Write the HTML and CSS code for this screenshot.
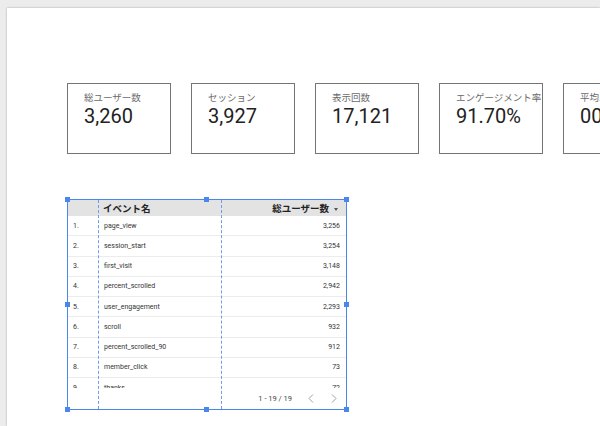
FILE: index.html
```html
<!DOCTYPE html>
<html lang="ja">
<head>
<meta charset="utf-8">
<link rel="stylesheet" href="styles.css">
</head>
<body>
<div class="canvas">
  <div class="cards">
    <div class="card"><div class="label">総ユーザー数</div><div class="value">3,260</div></div>
    <div class="card"><div class="label">セッション</div><div class="value">3,927</div></div>
    <div class="card"><div class="label">表示回数</div><div class="value">17,121</div></div>
    <div class="card"><div class="label">エンゲージメント率</div><div class="value">91.70%</div></div>
    <div class="card"><div class="label">平均エンゲージメント時間</div><div class="value">00:01:12</div></div>
  </div>

  <div class="table">
    <div class="thead">
      <div class="c-num"></div>
      <div class="c-name">イベント名</div>
      <div class="c-val">総ユーザー数<span class="caret"></span></div>
    </div>
    <div class="tbody">
      <div class="row"><div class="c-num">1.</div><div class="c-name">page_view</div><div class="c-val">3,256</div></div>
      <div class="row"><div class="c-num">2.</div><div class="c-name">session_start</div><div class="c-val">3,254</div></div>
      <div class="row"><div class="c-num">3.</div><div class="c-name">first_visit</div><div class="c-val">3,148</div></div>
      <div class="row"><div class="c-num">4.</div><div class="c-name">percent_scrolled</div><div class="c-val">2,942</div></div>
      <div class="row"><div class="c-num">5.</div><div class="c-name">user_engagement</div><div class="c-val">2,293</div></div>
      <div class="row"><div class="c-num">6.</div><div class="c-name">scroll</div><div class="c-val">932</div></div>
      <div class="row"><div class="c-num">7.</div><div class="c-name">percent_scrolled_90</div><div class="c-val">912</div></div>
      <div class="row"><div class="c-num">8.</div><div class="c-name">member_click</div><div class="c-val">73</div></div>
      <div class="row"><div class="c-num">9.</div><div class="c-name">thanks</div><div class="c-val">72</div></div>
    </div>
    <div class="tfoot">
      <span class="pages">1 - 19 / 19</span>
      <svg class="chev" width="6" height="9" viewBox="0 0 6 9"><polyline points="5,0.5 1,4.5 5,8.5" fill="none" stroke="#9e9e9e" stroke-width="1"/></svg>
      <svg class="chev" width="6" height="9" viewBox="0 0 6 9"><polyline points="1,0.5 5,4.5 1,8.5" fill="none" stroke="#9e9e9e" stroke-width="1"/></svg>
    </div>

    <div class="guide g1"></div>
    <div class="guide g2"></div>
    <div class="handle h-tl"></div>
    <div class="handle h-tm"></div>
    <div class="handle h-tr"></div>
    <div class="handle h-ml"></div>
    <div class="handle h-mr"></div>
    <div class="handle h-bl"></div>
    <div class="handle h-bm"></div>
    <div class="handle h-br"></div>
  </div>
</div>
</body>
</html>
```

FILE: styles.css
```css
html, body {
  margin: 0;
  padding: 0;
}
body {
  background: #ececec;
  width: 600px;
  height: 426px;
  overflow: hidden;
  font-family: Roboto, "Noto Sans CJK JP", sans-serif;
}
.canvas {
  margin: 8px 0 0 7px;
  width: 593px;
  height: 418px;
  overflow: hidden;
  background: #fff;
  box-shadow: 0 0 2px rgba(0, 0, 0, 0.3);
  box-sizing: border-box;
  padding: 75px 0 0 60px;
}
.cards {
  display: flex;
  gap: 20px;
  overflow: hidden;
}
.card {
  flex: 0 0 104px;
  height: 71px;
  box-sizing: border-box;
  border: 1px solid #747474;
  padding: 7px 0 0 16px;
  overflow: hidden;
  white-space: nowrap;
}
.label {
  font-family: "Noto Sans CJK JP", sans-serif;
  font-size: 9.5px;
  line-height: 13px;
  color: #6b6b6b;
}
.value {
  font-family: Roboto, sans-serif;
  font-size: 20px;
  line-height: 22px;
  color: #222;
  margin-top: 1px;
}

.table {
  position: relative;
  margin-top: 45px;
  width: 280px;
  height: 211px;
  box-sizing: border-box;
  border: 1px solid #4a86ec;
  display: flex;
  flex-direction: column;
}
.thead, .row {
  display: grid;
  grid-template-columns: 31px 123px 1fr;
  align-items: center;
}
.thead {
  height: 16px;
  background: #e3e3e3;
  font-family: "Noto Sans CJK JP", sans-serif;
  font-weight: bold;
  font-size: 9.5px;
  color: #222;
}
.thead .c-name {
  padding-left: 4px;
}
.thead .c-val {
  text-align: right;
  padding-right: 8px;
}
.caret {
  display: inline-block;
  width: 0;
  height: 0;
  border-left: 2.5px solid transparent;
  border-right: 2.5px solid transparent;
  border-top: 3px solid #555;
  margin-left: 5px;
  vertical-align: middle;
}
.tbody {
  height: 172px;
  overflow: hidden;
  flex: none;
}
.row {
  height: 20.25px;
  box-sizing: border-box;
  border-bottom: 1px solid #ececec;
  font-family: Roboto, sans-serif;
  font-size: 7px;
  color: #333;
}
.row .c-num {
  padding-left: 5px;
}
.row .c-name {
  padding-left: 5px;
}
.row .c-val {
  text-align: right;
  padding-right: 6px;
}
.tfoot {
  flex: 1;
  display: flex;
  align-items: center;
  justify-content: flex-end;
  padding-right: 9px;
  font-family: Roboto, sans-serif;
  font-size: 7.5px;
  color: #444;
}
.pages {
  margin-right: 16px;
}
.chev + .chev {
  margin-left: 17px;
}
.guide {
  position: absolute;
  top: 0;
  bottom: 0;
  width: 0;
  border-left: 1px dashed #6a9cf0;
}
.g1 { left: 30px; }
.g2 { left: 153px; }
.handle {
  position: absolute;
  width: 5px;
  height: 5px;
  background: #4a86ec;
}
.h-tl { left: -3px; top: -3px; }
.h-tm { left: 136px; top: -3px; }
.h-tr { left: 276px; top: -3px; }
.h-ml { left: -3px; top: 102px; }
.h-mr { left: 276px; top: 102px; }
.h-bl { left: -3px; top: 207px; }
.h-bm { left: 136px; top: 207px; }
.h-br { left: 276px; top: 207px; }
```
